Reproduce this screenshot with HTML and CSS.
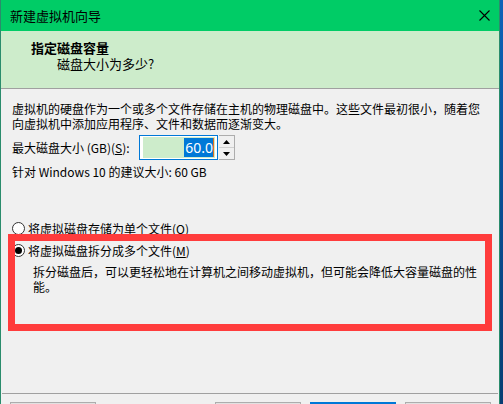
FILE: index.html
```html
<!DOCTYPE html>
<html lang="zh-CN">
<head>
<meta charset="utf-8">
<title>新建虚拟机向导</title>
<link rel="stylesheet" href="styles.css">
</head>
<body>
<div class="window">
  <div class="titlebar">
    <span class="title">新建虚拟机向导</span>
    <svg class="close" width="11" height="11" viewBox="0 0 11 11"><path d="M0.5 0.5 L10.5 10.5 M10.5 0.5 L0.5 10.5" stroke="#000" stroke-width="1.1" fill="none"/></svg>
  </div>
  <div class="header">
    <div class="h-title">指定磁盘容量</div>
    <div class="h-sub">磁盘大小为多少?</div>
  </div>
  <div class="content">
    <p class="para">虚拟机的硬盘作为一个或多个文件存储在主机的物理磁盘中。这些文件最初很小，随着您<br>向虚拟机中添加应用程序、文件和数据而逐渐变大。</p>
    <div class="size-row">
      <span class="label">最大磁盘大小 (GB)(<u>S</u>):</span>
      <div class="spin-input">
        <div class="field"><span class="sel">60.0</span><span class="caret"></span></div>
      </div>
      <div class="spin-btns">
        <div class="sbtn"><svg width="7" height="4" viewBox="0 0 7 4"><path d="M3.5 0 L7 4 L0 4 Z" fill="#000"/></svg></div>
        <div class="sbtn"><svg width="7" height="4" viewBox="0 0 7 4"><path d="M0 0 L7 0 L3.5 4 Z" fill="#000"/></svg></div>
      </div>
    </div>
    <p class="hint">针对 Windows 10 的建议大小: 60 GB</p>
    <div class="radio r1"><span class="circle"></span><span>将虚拟磁盘存储为单个文件(<u>O</u>)</span></div>
    <div class="radio r2"><span class="circle on"></span><span>将虚拟磁盘拆分成多个文件(<u>M</u>)</span></div>
    <p class="desc">拆分磁盘后，可以更轻松地在计算机之间移动虚拟机，但可能会降低大容量磁盘的性<br>能。</p>
  </div>
  <div class="footer">
    <div class="btn"></div>
    <div class="spacer"></div>
    <div class="btn"></div>
    <div class="btn default"></div>
    <div class="btn"></div>
  </div>
  <div class="highlight"></div>
</div>
</body>
</html>
```
FILE: styles.css
```css
html, body {
  margin: 0;
  padding: 0;
  height: 404px;
  overflow: hidden;
}
body {
  background: linear-gradient(#0d63b8, #0a4d94 50%, #083d73);
  font-family: "Noto Sans CJK SC", "Microsoft YaHei", sans-serif;
  font-size: 12px;
  color: #000;
}
.window {
  position: relative;
  width: 498px;
  height: 404px;
  border-left: 1px solid #2a8c6c;
  border-right: 1px solid #2a8c6c;
  background: #f0f0f0;
  display: flex;
  flex-direction: column;
  overflow: hidden;
}
.titlebar {
  height: 31px;
  flex: none;
  background: #00cc66;
  display: flex;
  align-items: center;
  justify-content: space-between;
  padding: 0 9px 0 9px;
}
.title {
  font-size: 13px;
  line-height: 16px;
}
.close { display: block; }
.header {
  height: 57px;
  flex: none;
  background: #cdeccb;
  border-bottom: 1px solid #a0a0a0;
  padding: 8px 0 0 30px;
  box-sizing: border-box;
  height: 58px;
}
.h-title {
  font-weight: bold;
  font-size: 13px;
  line-height: 17px;
}
.h-sub {
  font-size: 13px;
  line-height: 16px;
  margin-left: 26px;
}
.content {
  padding: 0 11px;
  flex: 1;
}
.para {
  margin: 12px 0 0;
  line-height: 15px;
  white-space: nowrap;
}
.size-row {
  display: flex;
  align-items: center;
  margin-top: 4px;
  height: 25px;
}
.label {
  width: 127px;
  line-height: 15px;
}
.spin-input {
  width: 79px;
  height: 25px;
  box-sizing: border-box;
  border: 1px solid #0078d7;
  background: #fff;
  padding: 1px 2px 1px 3px;
}
.field {
  height: 100%;
  background: #cdeccb;
  display: flex;
  justify-content: flex-end;
  align-items: center;
}
.sel {
  background: #0078d7;
  color: #fff;
  font-size: 14px;
  line-height: 19px;
  height: 19px;
  padding: 0 0 0 1px;
  font-family: "Noto Sans", sans-serif;
}
.caret {
  width: 1px;
  height: 19px;
  background: #e07020;
  margin-right: 1px;
}
.spin-btns {
  width: 16px;
  height: 25px;
  box-sizing: border-box;
  border: 1px solid #adadad;
  border-left: none;
  display: flex;
  flex-direction: column;
  margin-left: 1px;
}
.sbtn {
  flex: 1;
  display: flex;
  align-items: center;
  justify-content: center;
  background: #f0f0f0;
}
.sbtn + .sbtn { border-top: 1px solid #d0d0d0; }
.hint {
  margin: 4px 0 0;
  line-height: 15px;
}
.radio {
  display: flex;
  align-items: center;
  gap: 3px;
  line-height: 15px;
  height: 15px;
}
.r1 { margin-top: 42px; }
.r2 { margin-top: 7px; }
.circle {
  width: 13px;
  height: 13px;
  box-sizing: border-box;
  border: 1px solid #333;
  border-radius: 50%;
  background: #fff;
  display: flex;
  align-items: center;
  justify-content: center;
}
.circle.on::after {
  content: "";
  width: 7px;
  height: 7px;
  border-radius: 50%;
  background: #000;
}
.desc {
  margin: 6px 0 0 21px;
  line-height: 15px;
  white-space: nowrap;
}
.footer {
  height: 11px;
  flex: none;
  box-sizing: border-box;
  border-top: 1px solid #a0a0a0;
  margin: 0 1px;
  padding: 8px 0 0 8px;
  display: flex;
  gap: 9px;
  overflow: hidden;
}
.spacer { width: 101px; flex: none; }
.btn {
  width: 86px;
  height: 23px;
  flex: none;
  box-sizing: border-box;
  border: 1px solid #adadad;
  background: #e1e1e1;
}
.btn.default { border: 2px solid #0078d7; }
.highlight {
  position: absolute;
  left: 7px;
  top: 234px;
  width: 484px;
  height: 97px;
  box-sizing: border-box;
  border: 7px solid #ff3c3c;
  pointer-events: none;
}
```
